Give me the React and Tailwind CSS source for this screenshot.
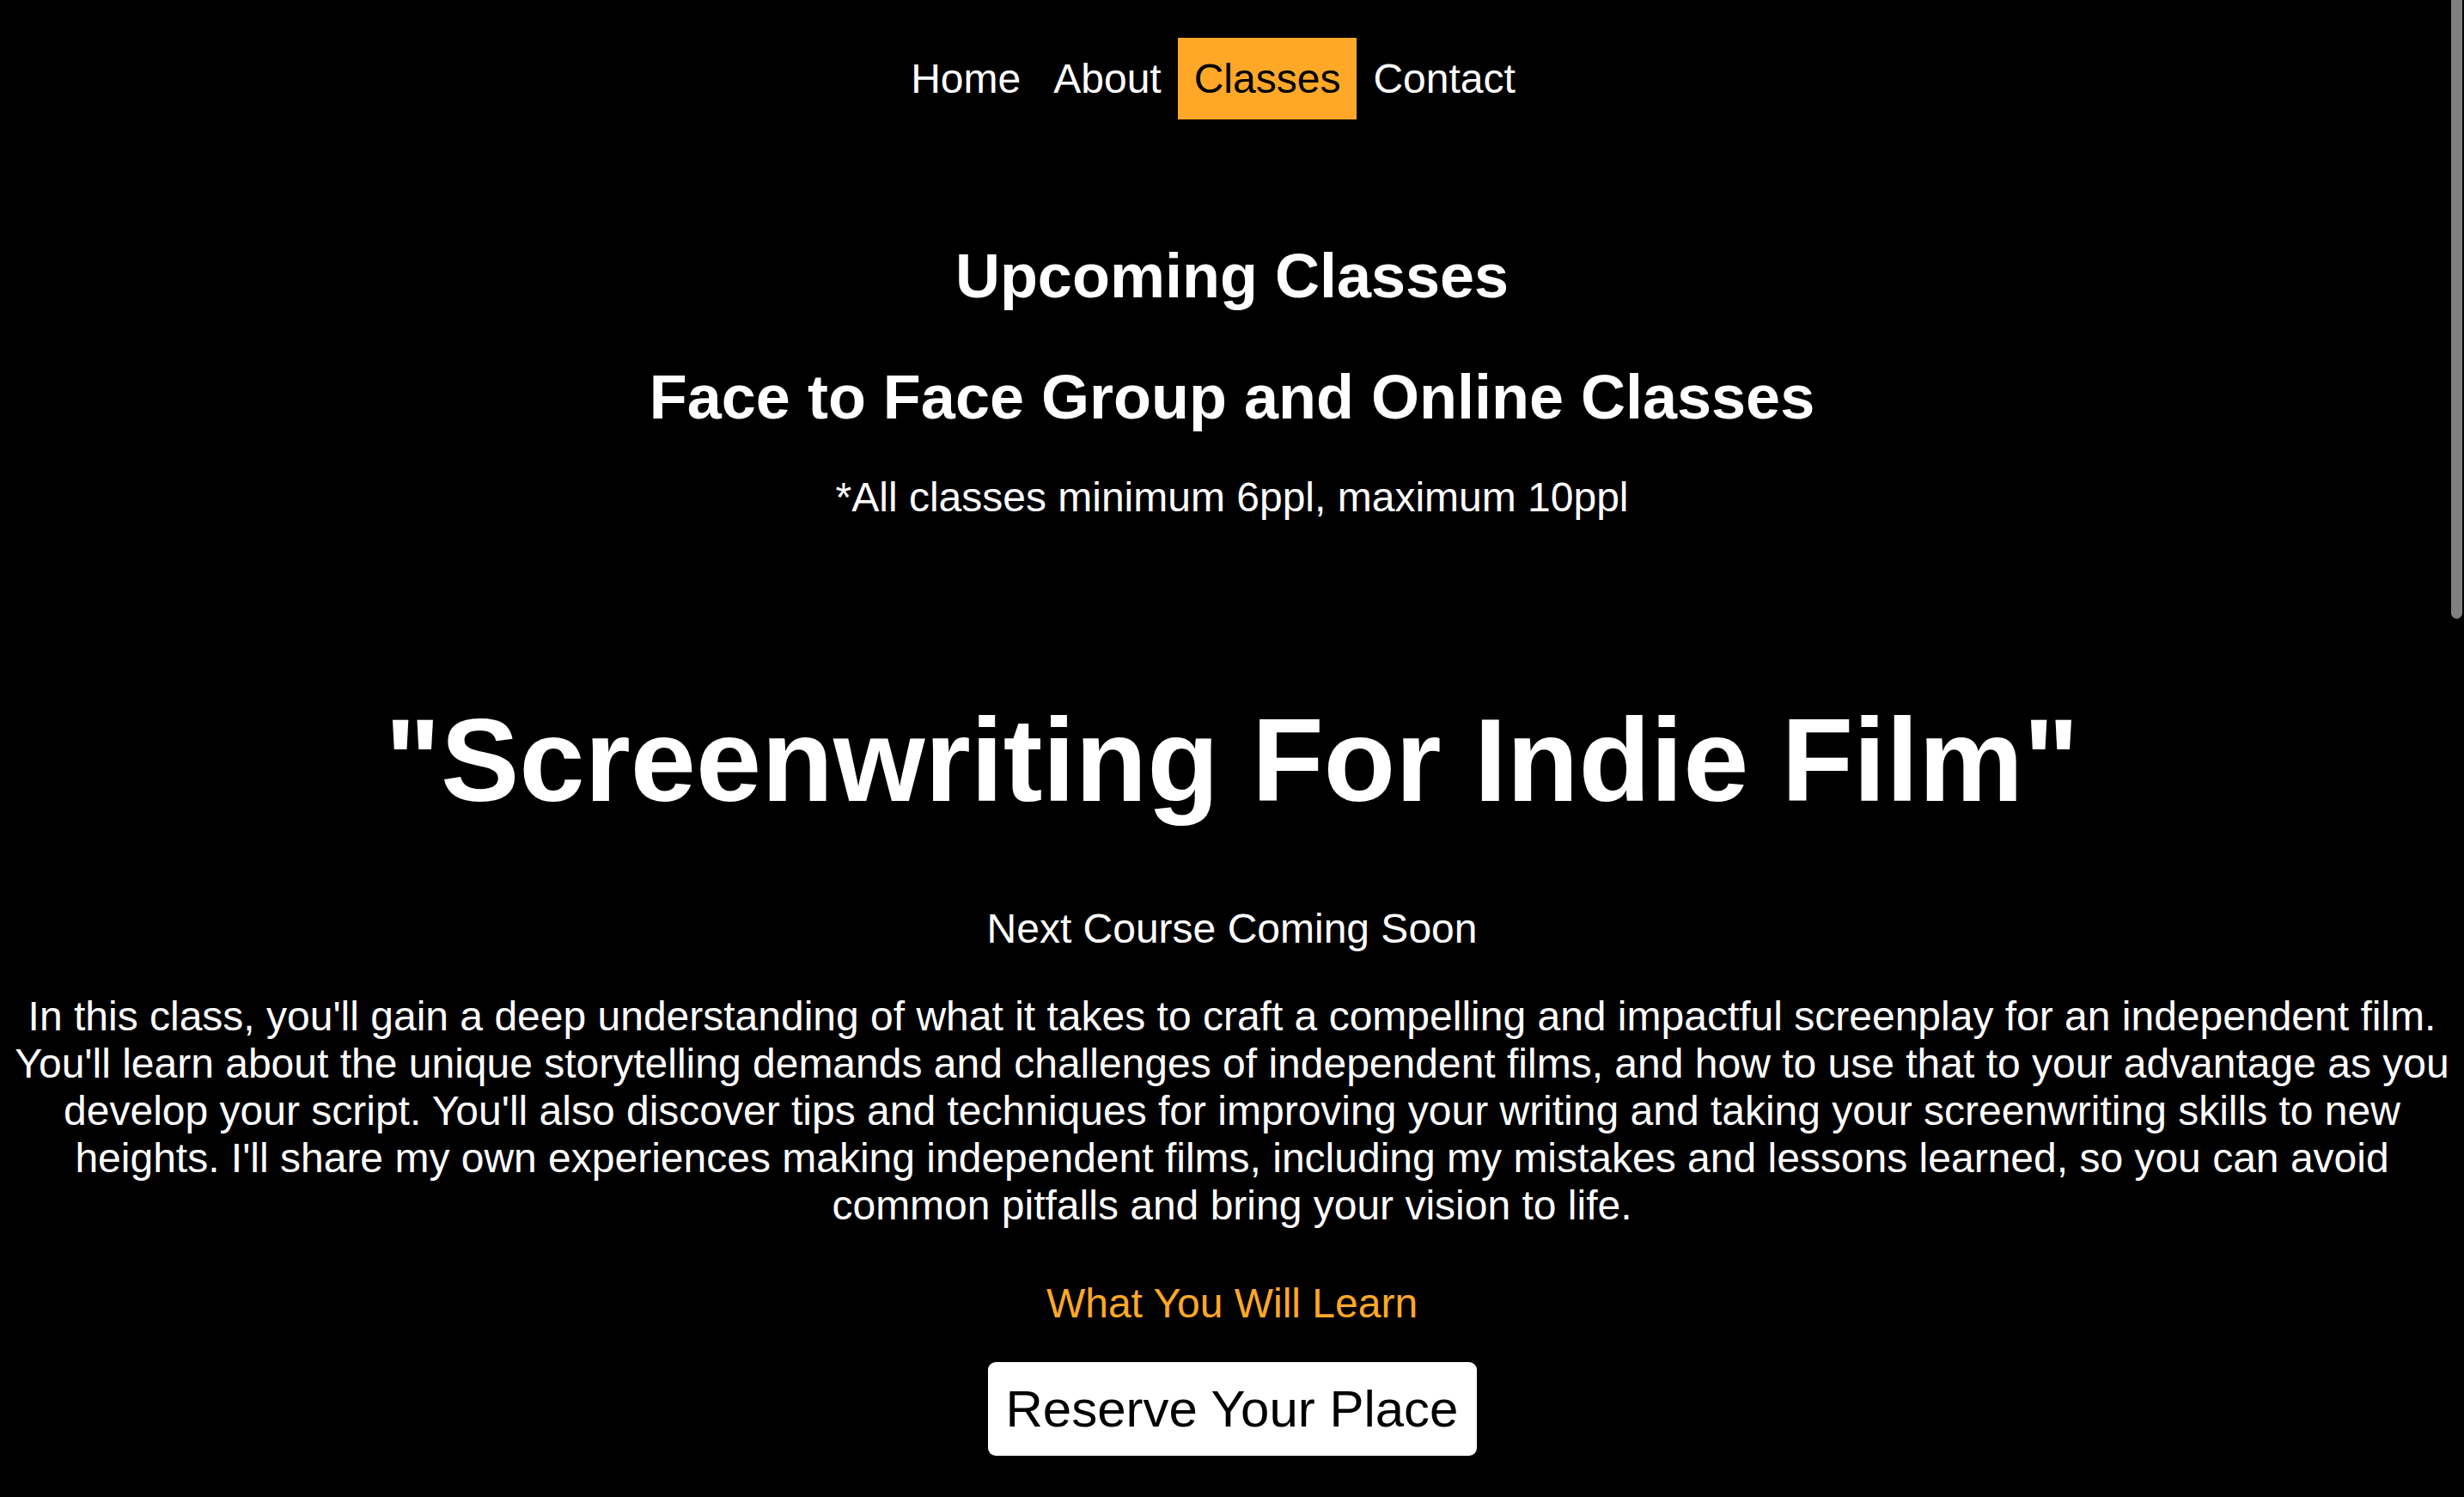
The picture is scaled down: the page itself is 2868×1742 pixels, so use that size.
import React from "react";

const links = ["Home", "About", "Classes", "Contact"];

const App = () => {
  return (
    <div className="min-h-screen bg-black text-white text-center font-['Liberation_Sans',Arial,sans-serif]">
      <nav className="flex justify-center pt-[44px] pr-[44px]">
        {links.map((name) => (
          <a
            key={name}
            href="#"
            className={
              name === "Classes"
                ? "px-[19px] py-[20px] text-[48px] leading-[55px] bg-[#ffa828] text-black"
                : "px-[19px] py-[20px] text-[48px] leading-[55px] text-white"
            }
          >
            {name}
          </a>
        ))}
      </nav>

      <section>
        <h2 className="mt-[141px] text-[72px] leading-[83px] font-bold">
          Upcoming Classes
        </h2>
        <h2 className="mt-[58px] text-[72px] leading-[83px] font-bold">
          Face to Face Group and Online Classes
        </h2>
        <p className="mt-[47px] text-[48px] leading-[55px]">
          *All classes minimum 6ppl, maximum 10ppl
        </p>
      </section>

      <section className="pb-40">
        <h1 className="mt-[200px] text-[137px] leading-[157px] font-bold">
          "Screenwriting For Indie Film"
        </h1>
        <p className="mt-[90px] text-[48px] leading-[55px]">
          Next Course Coming Soon
        </p>
        <p className="mt-[47px] text-[48px] leading-[55px]">
          In this class, you'll gain a deep understanding of what it takes to
          craft a compelling and impactful screenplay for an independent film.
          You'll learn about the unique storytelling demands and challenges of
          independent films, and how to use that to your advantage as you
          develop your script. You'll also discover tips and techniques for
          improving your writing and taking your screenwriting skills to new
          heights. I'll share my own experiences making independent films,
          including my mistakes and lessons learned, so you can avoid common
          pitfalls and bring your vision to life.
        </p>
        <h3 className="mt-[59px] text-[48px] leading-[55px] text-[#ffa828]">
          What You Will Learn
        </h3>
        <button className="mt-[41px] px-[21px] py-[20px] text-[60px] leading-[69px] bg-white text-black rounded-[9px]">
          Reserve Your Place
        </button>
      </section>

      {/* overlay scrollbar thumb */}
      <div className="fixed top-0 right-[2px] w-[13px] h-[720px] rounded-b-full bg-[#808080]" />
    </div>
  );
};

export default App;
